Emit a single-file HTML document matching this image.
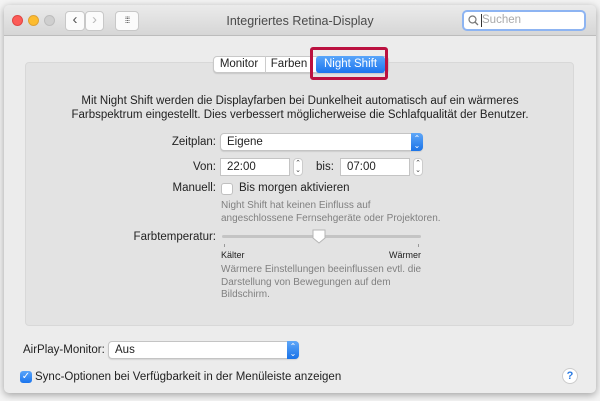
<!DOCTYPE html>
<html><head><style>
*{margin:0;padding:0;box-sizing:border-box}
body{width:600px;height:401px;background:#f4f4f4;font-family:"Liberation Sans",sans-serif;font-size:11px;color:#222;position:relative;overflow:hidden}
.a{position:absolute}
.win{left:4px;top:5px;width:592px;height:388px;background:#ececec;border-radius:5px;box-shadow:0 2px 8px rgba(0,0,0,.35);overflow:hidden}
.tb{left:0;top:0;width:592px;height:31px;background:linear-gradient(#ebebeb,#d6d6d6);border-bottom:1px solid #bcbcbc}
.dot{width:11px;height:11px;border-radius:50%;top:10px}
.btn{background:#fbfbfb;border:1px solid #c8c8c8;border-radius:4px;height:20px;top:6px}
.inner{left:21px;top:57px;width:549px;height:264px;background:#e3e3e3;border:1px solid #d8d8d8;border-radius:4px}
.field{background:#fff;border:1px solid #c4c4c4;height:18px;padding-left:6px;line-height:16px;font-size:11.5px}
.sel{background:#fff;border:1px solid #c4c4c4;border-radius:4px;box-shadow:0 1px 1px rgba(0,0,0,.1)}
.arr{background:linear-gradient(#5fa7f8,#1a73e8);border-radius:0 4px 4px 0;color:#fff;font-size:8px;text-align:center;line-height:7px;padding-top:2px}
.gray{color:#808080;font-size:10px;line-height:12.5px}
.lbl{text-align:right;font-size:11.5px}
</style></head><body>
<div class="a win">
 <div class="a tb">
  <div class="a dot" style="left:8px;background:#fc5b57;border:1px solid #e04643"></div>
  <div class="a dot" style="left:24px;background:#fdbc2e;border:1px solid #dea236"></div>
  <div class="a dot" style="left:40px;background:#cfcfcf;border:1px solid #bdbdbd"></div>
  <div class="a btn" style="left:61px;width:20px;font-size:15px;line-height:16px;text-align:center;color:#555">‹</div>
  <div class="a btn" style="left:81px;width:19px;font-size:15px;line-height:16px;text-align:center;color:#bbb">›</div>
  <div class="a btn" style="left:111px;width:24px;font-size:9px;line-height:17px;text-align:center;color:#555;letter-spacing:-1px">⁞⁞⁞</div>
  <div class="a" style="left:0;width:592px;top:9px;text-align:center;font-size:12.5px;color:#4a4a4a">Integriertes Retina-Display</div>
  <div class="a" style="left:458px;top:5px;width:124px;height:21px;background:#fff;border:2px solid #8db4f2;border-radius:5px;font-size:11.5px;color:#aaa;line-height:17px;padding-left:18px">Suchen
   <svg class="a" style="left:4px;top:3px" width="11" height="11"><circle cx="4.5" cy="4.5" r="3.5" fill="none" stroke="#777" stroke-width="1.2"/><line x1="7" y1="7" x2="10" y2="10" stroke="#777" stroke-width="1.3"/></svg>
   <div class="a" style="left:17px;top:2px;width:1px;height:13px;background:#333"></div>
  </div>
 </div>
 <div class="a inner"></div>
 <div class="a" style="left:209px;top:51px;width:176px;height:17px;background:#fff;border:1px solid #c8c8c8;border-radius:4px;box-shadow:0 1px 1px rgba(0,0,0,.12)"></div>
 <div class="a" style="left:209px;top:53px;width:52px;text-align:center;font-size:11.5px">Monitor</div>
 <div class="a" style="left:261px;top:51px;width:1px;height:17px;background:#ccc"></div>
 <div class="a" style="left:262px;top:53px;width:46px;text-align:center;font-size:11.5px">Farben</div>
 <div class="a" style="left:312px;top:51px;width:69px;height:17px;background:linear-gradient(#5aa5fa,#1b75ee);border-radius:3px;color:#fff;text-align:center;font-size:11.5px;line-height:16px">Night Shift</div>
 <div class="a" style="left:306px;top:42px;width:78px;height:33px;border:3px solid #bb1140;border-radius:3px"></div>
 <div class="a" style="left:0;width:592px;top:89px;text-align:center;font-size:11.5px;line-height:14px">Mit Night Shift werden die Displayfarben bei Dunkelheit automatisch auf ein wärmeres<br>Farbspektrum eingestellt. Dies verbessert möglicherweise die Schlafqualität der Benutzer.</div>
 <div class="a lbl" style="left:100px;width:112px;top:131px">Zeitplan:</div>
 <div class="a sel" style="left:216px;top:128px;width:203px;height:18px;padding-left:6px;font-size:11.5px;line-height:16px">Eigene<div class="a arr" style="right:-1px;top:-1px;width:12px;height:18px">⌃<br>⌄</div></div>
 <div class="a lbl" style="left:100px;width:112px;top:156px">Von:</div>
 <div class="a field" style="left:216px;top:153px;width:70px">22:00</div>
 <div class="a" style="left:289px;top:153px;width:10px;height:18px;border:1px solid #ccc;border-radius:4px;background:#fff;font-size:7px;line-height:7px;text-align:center;color:#444;padding-top:1px">⌃<br>⌄</div>
 <div class="a" style="left:312px;top:156px;font-size:11.5px">bis:</div>
 <div class="a field" style="left:336px;top:153px;width:70px">07:00</div>
 <div class="a" style="left:409px;top:153px;width:10px;height:18px;border:1px solid #ccc;border-radius:4px;background:#fff;font-size:7px;line-height:7px;text-align:center;color:#444;padding-top:1px">⌃<br>⌄</div>
 <div class="a lbl" style="left:100px;width:112px;top:177px">Manuell:</div>
 <div class="a" style="left:217px;top:178px;width:12px;height:12px;background:#fff;border:1px solid #c0c0c0;border-radius:3px"></div>
 <div class="a" style="left:235px;top:177px;font-size:11.5px">Bis morgen aktivieren</div>
 <div class="a gray" style="left:217px;top:195px">Night Shift hat keinen Einfluss auf<br>angeschlossene Fernsehgeräte oder Projektoren.</div>
 <div class="a lbl" style="left:60px;width:152px;top:226px">Farbtemperatur:</div>
 <div class="a" style="left:218px;top:230px;width:199px;height:3px;background:#c4c4c4;border-radius:2px"></div>
 <svg class="a" style="left:308px;top:224px" width="14" height="15"><path d="M1 1 H13 V9 L7 14 L1 9 Z" fill="#fff" stroke="#b5b5b5"/></svg>
 <div class="a" style="left:220px;top:239px;width:1px;height:3px;background:#999"></div>
 <div class="a" style="left:414px;top:239px;width:1px;height:3px;background:#999"></div>
 <div class="a" style="left:217px;top:245px;font-size:9px">Kälter</div>
 <div class="a" style="left:385px;top:245px;font-size:9px">Wärmer</div>
 <div class="a gray" style="left:217px;top:259px">Wärmere Einstellungen beeinflussen evtl. die<br>Darstellung von Bewegungen auf dem<br>Bildschirm.</div>
 <div class="a" style="left:19px;top:339px;font-size:11.5px">AirPlay-Monitor:</div>
 <div class="a sel" style="left:104px;top:336px;width:191px;height:18px;padding-left:6px;font-size:11.5px;line-height:16px">Aus<div class="a arr" style="right:-1px;top:-1px;width:12px;height:18px">⌃<br>⌄</div></div>
 <div class="a" style="left:16px;top:366px;width:12px;height:12px;background:linear-gradient(#5aa5fa,#1b75ee);border-radius:3px;color:#fff;font-size:10px;line-height:12px;text-align:center">✓</div>
 <div class="a" style="left:31px;top:366px;font-size:11.5px">Sync-Optionen bei Verfügbarkeit in der Menüleiste anzeigen</div>
 <div class="a" style="left:558px;top:363px;width:16px;height:16px;border-radius:50%;background:#fff;border:1px solid #ccc;color:#2a7ae2;font-size:11px;line-height:14px;text-align:center;font-weight:bold">?</div>
</div>
</body></html>
